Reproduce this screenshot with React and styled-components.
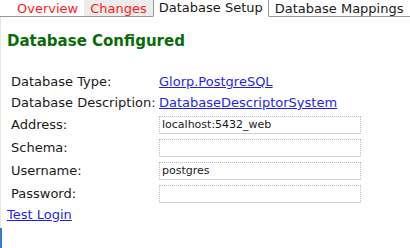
import React from "react";
import styled, { createGlobalStyle } from "styled-components";

const Global = createGlobalStyle`
  html, body { margin: 0; padding: 0; background: #fff; }
  body { font-family: "DejaVu Sans", Verdana, sans-serif; font-size: 13px; color: #1a1a1a; }
`;

const Page = styled.div`
  width: 410px;
  height: 248px;
  position: relative;
  overflow: hidden;
`;

const TabBar = styled.div`
  display: flex;
  align-items: flex-end;
  height: 17px;
  padding-left: 11px;
  border-bottom: 1px solid #999;
  box-sizing: border-box;
`;

const Tab = styled.div`
  box-sizing: border-box;
  padding: 0 5px;
  font-size: 13px;
  line-height: 16px;
  color: ${(p) => (p.$red ? "#ff1a1a" : "#1a1a1a")};
  background: ${(p) => (p.$shaded ? "#ececec" : p.$active ? "#fff" : "transparent")};
  border: 1px solid ${(p) => (p.$active ? "#999" : "transparent")};
  border-bottom: ${(p) => (p.$active ? "1px solid #fff" : "none")};
  margin-bottom: ${(p) => (p.$active ? "-1px" : "0")};
  height: ${(p) => (p.$active ? "18px" : "16px")};
  white-space: nowrap;
`;

const Content = styled.div`
  position: relative;
  border-left: 1px solid #e6e6e6;
  height: 231px;
  box-sizing: border-box;
  padding: 15px 0 0 6px;
  &::after {
    content: "";
    position: absolute;
    left: -1px;
    top: 211px;
    width: 2px;
    height: 20px;
    background: #3a78d8;
  }
`;

const Heading = styled.h2`
  margin: 0 0 21px 0;
  font-size: 15px;
  line-height: 18px;
  font-weight: bold;
  color: #0a6b0a;
`;

const Form = styled.div`
  display: grid;
  grid-template-columns: 148px 204px;
  padding-left: 4px;
  align-items: center;
`;

const Label = styled.div`
  height: ${(p) => p.$h}px;
  line-height: ${(p) => p.$h}px;
  white-space: nowrap;
`;

const Cell = styled.div`
  height: ${(p) => p.$h}px;
  display: flex;
  align-items: center;
`;

const Link = styled.a`
  color: #1f1fee;
  text-decoration: underline;
  font-size: 13px;
  cursor: pointer;
`;

const Field = styled.input`
  width: 202px;
  height: 18px;
  box-sizing: border-box;
  border: 1px dotted #bcbcbc;
  border-bottom: 1px solid #cfcfcf;
  padding: 0 2px;
  font-family: "DejaVu Sans", Verdana, sans-serif;
  font-size: 11px;
  color: #1a1a1a;
  outline: none;
  background: #fff;
`;

const TestLink = styled(Link)`
  display: block;
  margin-top: 1px;
  line-height: 18px;
`;

export default function App() {
  return (
    <Page>
      <Global />
      <TabBar>
        <Tab $red>Overview</Tab>
        <Tab $red $shaded>Changes</Tab>
        <Tab $active>Database Setup</Tab>
        <Tab>Database Mappings</Tab>
      </TabBar>
      <Content>
        <Heading>Database Configured</Heading>
        <Form>
          <Label $h={21}>Database Type:</Label>
          <Cell $h={21}><Link>Glorp.PostgreSQL</Link></Cell>
          <Label $h={21}>Database Description:</Label>
          <Cell $h={21}><Link>DatabaseDescriptorSystem</Link></Cell>
          <Label $h={23}>Address:</Label>
          <Cell $h={23}><Field defaultValue="localhost:5432_web" /></Cell>
          <Label $h={23}>Schema:</Label>
          <Cell $h={23}><Field defaultValue="" /></Cell>
          <Label $h={23}>Username:</Label>
          <Cell $h={23}><Field defaultValue="postgres" /></Cell>
          <Label $h={23}>Password:</Label>
          <Cell $h={23}><Field type="password" defaultValue="" /></Cell>
        </Form>
        <TestLink>Test Login</TestLink>
      </Content>
    </Page>
  );
}
